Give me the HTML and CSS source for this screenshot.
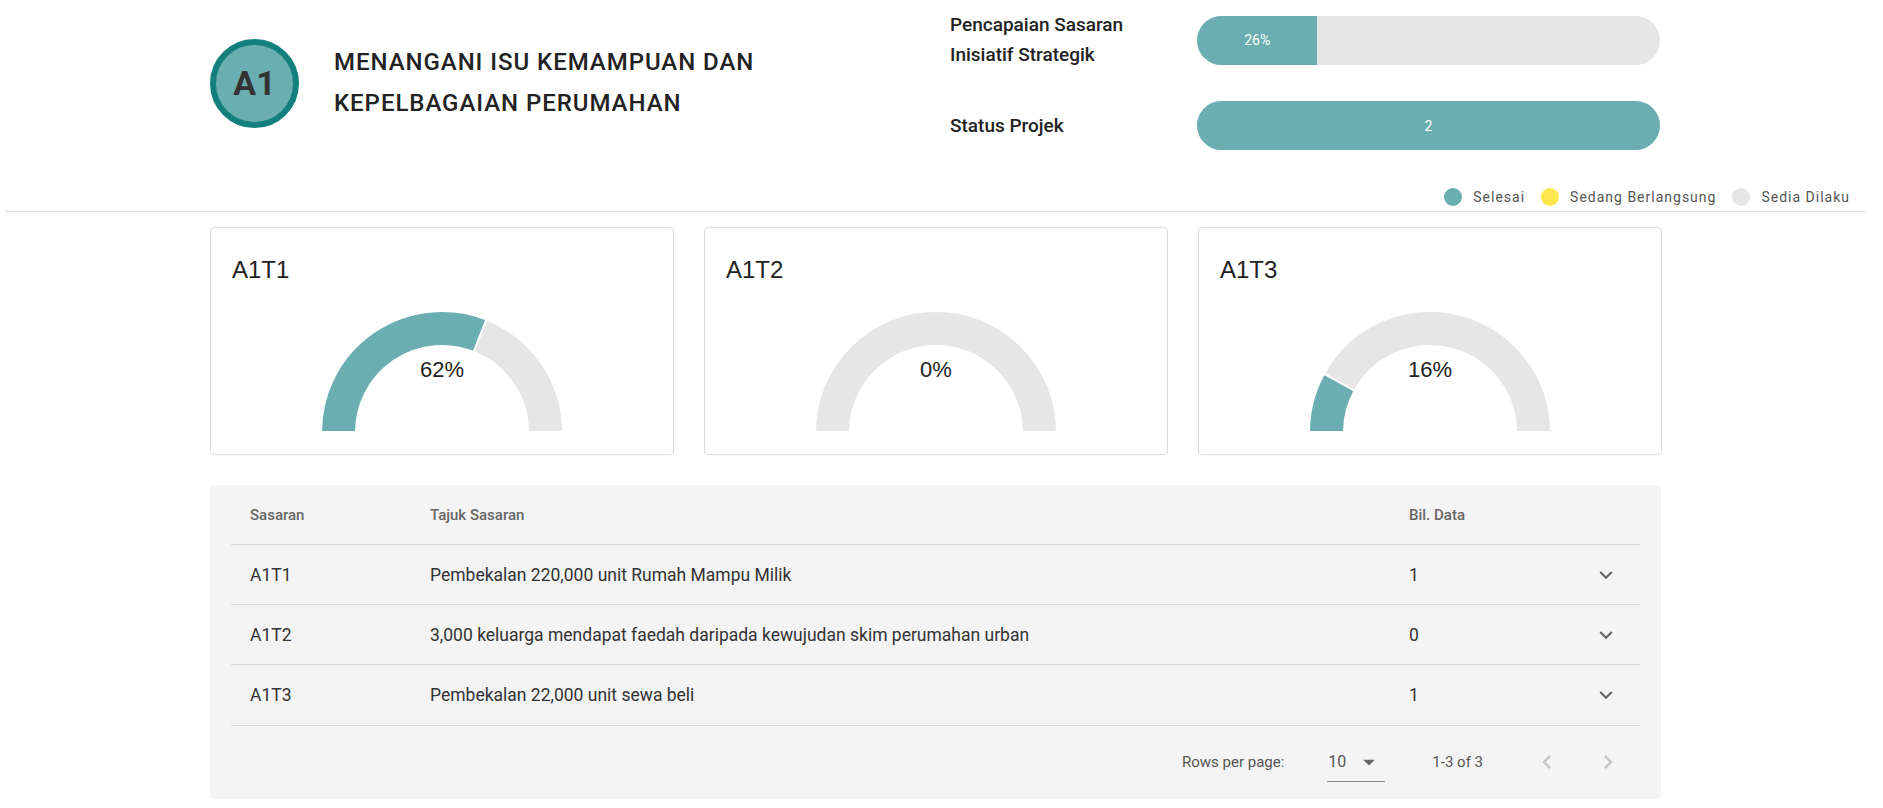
FILE: index.html
```html
<!DOCTYPE html>
<html lang="ms">
<head>
<meta charset="utf-8">
<title>A1</title>
<link rel="stylesheet" href="styles.css">
</head>
<body>
<header class="header">
  <div class="brand">
    <div class="badge">A1</div>
    <h1 class="title">MENANGANI ISU KEMAMPUAN DAN<br>KEPELBAGAIAN PERUMAHAN</h1>
  </div>
  <div class="kpis">
    <div class="kpi-row">
      <div class="kpi-label">Pencapaian Sasaran<br>Inisiatif Strategik</div>
      <div class="bar"><div class="bar-fill" style="width:26%">26%</div></div>
    </div>
    <div class="kpi-row">
      <div class="kpi-label">Status Projek</div>
      <div class="bar"><div class="bar-fill" style="width:100%">2</div></div>
    </div>
  </div>
</header>
<div class="legend">
  <span class="legend-item"><span class="dot dot-done"></span>Selesai</span>
  <span class="legend-item"><span class="dot dot-progress"></span>Sedang Berlangsung</span>
  <span class="legend-item"><span class="dot dot-todo"></span>Sedia Dilaku</span>
</div>
<hr class="divider">
<main class="main">
  <section class="cards">
    <div class="card">
      <div class="card-title">A1T1</div>
      <div class="gauge">
        <svg width="244" height="122" viewBox="0 0 244 122">
          <path class="seg-done" d="M1 122 A121 121 0 0 1 166.54 9.50 L153.66 42.04 A86 86 0 0 0 36 122 Z"/>
          <path class="seg-rest" d="M166.54 9.50 A121 121 0 0 1 243 122 L208 122 A86 86 0 0 0 153.66 42.04 Z"/>
        </svg>
        <span class="gauge-value">62%</span>
      </div>
    </div>
    <div class="card">
      <div class="card-title">A1T2</div>
      <div class="gauge">
        <svg width="244" height="122" viewBox="0 0 244 122">
          <path class="seg-rest" d="M1 122 A121 121 0 0 1 243 122 L208 122 A86 86 0 0 0 36 122 Z"/>
        </svg>
        <span class="gauge-value">0%</span>
      </div>
    </div>
    <div class="card">
      <div class="card-title">A1T3</div>
      <div class="gauge">
        <svg width="244" height="122" viewBox="0 0 244 122">
          <path class="seg-done" d="M1 122 A121 121 0 0 1 15.97 63.70 L46.64 80.57 A86 86 0 0 0 36 122 Z"/>
          <path class="seg-rest" d="M15.97 63.70 A121 121 0 0 1 243 122 L208 122 A86 86 0 0 0 46.64 80.57 Z"/>
        </svg>
        <span class="gauge-value">16%</span>
      </div>
    </div>
  </section>

  <section class="table">
    <div class="row head">
      <div class="cell">Sasaran</div>
      <div class="cell">Tajuk Sasaran</div>
      <div class="cell">Bil. Data</div>
      <div class="cell"></div>
    </div>
    <div class="row">
      <div class="cell">A1T1</div>
      <div class="cell">Pembekalan 220,000 unit Rumah Mampu Milik</div>
      <div class="cell">1</div>
      <div class="cell icon-cell"><svg class="expand" width="26" height="26" viewBox="0 0 24 24"><path d="M16.59 8.59L12 13.17 7.41 8.59 6 10l6 6 6-6z"/></svg></div>
    </div>
    <div class="row">
      <div class="cell">A1T2</div>
      <div class="cell">3,000 keluarga mendapat faedah daripada kewujudan skim perumahan urban</div>
      <div class="cell">0</div>
      <div class="cell icon-cell"><svg class="expand" width="26" height="26" viewBox="0 0 24 24"><path d="M16.59 8.59L12 13.17 7.41 8.59 6 10l6 6 6-6z"/></svg></div>
    </div>
    <div class="row">
      <div class="cell">A1T3</div>
      <div class="cell">Pembekalan 22,000 unit sewa beli</div>
      <div class="cell">1</div>
      <div class="cell icon-cell"><svg class="expand" width="26" height="26" viewBox="0 0 24 24"><path d="M16.59 8.59L12 13.17 7.41 8.59 6 10l6 6 6-6z"/></svg></div>
    </div>
    <div class="pager">
      <span class="pager-label">Rows per page:</span>
      <span class="select">10<svg class="drop" width="28" height="28" viewBox="0 0 24 24"><path d="M7 10l5 5 5-5z"/></svg></span>
      <span class="range">1-3 of 3</span>
      <svg class="nav" width="28" height="28" viewBox="0 0 24 24"><path d="M15.41 16.59L10.83 12l4.58-4.59L14 6l-6 6 6 6 1.41-1.41z"/></svg>
      <svg class="nav" width="28" height="28" viewBox="0 0 24 24"><path d="M8.59 16.59L13.17 12 8.59 7.41 10 6l6 6-6 6-1.41-1.41z"/></svg>
    </div>
  </section>
</main>
</body>
</html>
```

FILE: styles.css
```css
* { box-sizing: border-box; }
html, body { margin: 0; padding: 0; background: #fff; }
body {
  font-family: Roboto, "Liberation Sans", Arial, sans-serif;
  color: #222;
}

.header {
  display: flex;
  align-items: center;
  padding: 10px 0 0 210px;
}
.brand {
  width: 740px;
  display: flex;
  align-items: center;
  gap: 35px;
  padding-top: 6px;
}
.badge {
  width: 89px;
  height: 89px;
  border-radius: 50%;
  border: 6px solid #13807e;
  background: #6aaeb2;
  color: #333;
  font-weight: 700;
  font-size: 34px;
  display: flex;
  align-items: center;
  justify-content: center;
  flex-shrink: 0;
}
.title {
  margin: 0;
  font-size: 24px;
  font-weight: 500;
  line-height: 41px;
  letter-spacing: 0.95px;
  color: #222;
}
.kpis {
  display: flex;
  flex-direction: column;
  gap: 31px;
}
.kpi-row {
  display: flex;
  align-items: center;
}
.kpi-label {
  width: 247px;
  font-size: 19px;
  font-weight: 500;
  line-height: 30px;
  color: #222;
}
.bar {
  width: 463px;
  height: 49px;
  border-radius: 25px;
  background: #e6e6e6;
  overflow: hidden;
  display: flex;
}
.bar-fill {
  height: 100%;
  background: #6aaeb2;
  color: #fff;
  font-size: 14px;
  display: flex;
  align-items: center;
  justify-content: center;
}

.legend {
  display: flex;
  justify-content: flex-end;
  gap: 16px;
  margin-top: 38px;
  padding-right: 33px;
  height: 18px;
}
.legend-item {
  display: flex;
  align-items: center;
  gap: 11px;
  font-size: 14px;
  letter-spacing: 1px;
  color: #555;
  line-height: 18px;
}
.dot {
  width: 18px;
  height: 18px;
  border-radius: 50%;
  display: inline-block;
}
.dot-done { background: #6aaeb2; }
.dot-progress { background: #fde74c; }
.dot-todo { background: #e6e6e6; }

.divider {
  border: 0;
  border-top: 1px solid #dcdcdc;
  margin: 5px 18px 0 5px;
}

.main {
  width: 1451px;
  margin: 15px 0 0 210px;
}
.cards {
  display: grid;
  grid-template-columns: repeat(3, 464px);
  gap: 30px;
}
.card {
  height: 228px;
  border: 1px solid #dcdcdc;
  border-radius: 4px;
  padding: 28px 21px 0;
}
.card-title {
  font-family: "Liberation Sans", Arial, sans-serif;
  font-size: 24px;
  line-height: 28px;
  color: #222;
}
.gauge {
  position: relative;
  margin-top: 26px;
  display: flex;
  justify-content: center;
}
.gauge svg { display: block; }
.seg-done { fill: #6aaeb2; stroke: #fff; stroke-width: 2; }
.seg-rest { fill: #e6e6e6; stroke: #fff; stroke-width: 2; }
.gauge-value {
  position: absolute;
  left: 0;
  right: 0;
  top: 47px;
  text-align: center;
  font-family: "Liberation Sans", Arial, sans-serif;
  font-size: 22px;
  line-height: 26px;
  color: #222;
}

.table {
  margin-top: 30px;
  background: #f4f4f4;
  border-radius: 4px;
  padding: 0 21px;
  height: 314px;
}
.row {
  display: grid;
  grid-template-columns: 180px 979px 182px 68px;
  height: 60px;
  align-items: center;
  border-bottom: 1px solid #dadada;
  font-size: 17.5px;
  color: #333;
}
.row.head {
  height: 60px;
  font-size: 15px;
  font-weight: 500;
  color: #666;
}
.row:nth-child(4) { height: 61px; }
.cell { padding-left: 19px; }
.icon-cell {
  padding-left: 0;
  display: flex;
  justify-content: center;
}
.expand { fill: #666; display: block; }

.pager {
  display: flex;
  align-items: center;
  justify-content: flex-end;
  height: 72px;
  font-size: 15px;
  color: #555;
  padding-right: 18px;
}
.pager-label { margin-right: 43px; }
.select {
  display: flex;
  align-items: center;
  gap: 9px;
  height: 40px;
  padding: 0 2px 0 1px;
  border-bottom: 1px solid #888;
  color: #555;
  font-size: 16px;
}
.drop { fill: #666; display: block; }
.range { margin-left: 47px; margin-right: 50px; }
.nav { fill: #c4c4c4; display: block; }
.nav + .nav { margin-left: 33px; }
```
